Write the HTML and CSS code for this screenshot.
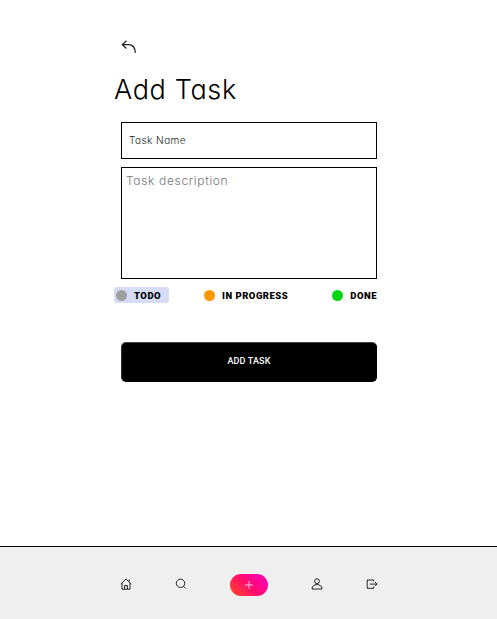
FILE: index.html
```html
<!DOCTYPE html>
<html lang="en">
<head>
<meta charset="utf-8">
<title>Add Task</title>
<link rel="stylesheet" href="styles.css">
</head>
<body>
<main class="page">
  <a class="back" href="#" aria-label="Back"><svg width="16" height="14" viewBox="0 0 16 14"><path d="M5.5 .8 1.2 4.7l4.3 3.8M1.2 4.7h6.3c4 0 6.8 3 6.8 8.3"/></svg></a>
  <h1 class="title">Add Task</h1>
  <form class="form">
    <input class="name" type="text" placeholder="Task Name">
    <textarea class="description" placeholder="Task description"></textarea>
    <div class="statuses">
      <span class="status selected"><i class="dot gray"></i>TODO</span>
      <span class="status progress"><i class="dot orange"></i>IN PROGRESS</span>
      <span class="status"><i class="dot green"></i>DONE</span>
    </div>
    <button class="submit" type="button">ADD TASK</button>
  </form>
</main>
<nav class="nav">
  <a href="#" aria-label="Home"><svg width="12" height="12" viewBox="0 0 12 12"><path d="M.7 6 6 1l5.3 5M2 5v6.2h8V5M4.6 11V7.5h2.8V11M9.3 1.5v2"/></svg></a>
  <a href="#" aria-label="Search"><svg width="12" height="12" viewBox="0 0 12 12"><circle cx="5.5" cy="5.3" r="4.2"/><path d="m8.6 8.4 2 2"/></svg></a>
  <a class="add" href="#" aria-label="Add"><svg width="10" height="10" viewBox="0 0 10 10"><path d="M5 1v8M1 5h8"/></svg></a>
  <a href="#" aria-label="Profile"><svg width="12" height="12" viewBox="0 0 12 12"><circle cx="6" cy="3.2" r="2.4"/><path d="M1 11c0-2.8 2-4.4 5-4.4s5 1.6 5 4.4z"/></svg></a>
  <a href="#" aria-label="Log out"><svg width="12" height="12" viewBox="0 0 12 12"><path d="M7.5 3.5V2H1.2v8.3h6.3V8.6M3.8 6.1H11M9 4l2.1 2.1L9 8.2"/></svg></a>
</nav>
</body>
</html>
```
FILE: styles.css
```css
* { box-sizing: border-box; }
body {
  margin: 0;
  height: 619px;
  display: flex;
  flex-direction: column;
  background: #fff;
  color: #000;
  font-family: Roboto, sans-serif;
  overflow: hidden;
}
svg { display: block; fill: none; stroke: #222; stroke-width: 1; }
.page { flex: 1; width: 256px; margin-left: 121px; padding-top: 40px; }
.back { display: block; width: 16px; }
.back svg { stroke-width: 1.2; }
.title, .name, .description {
  font-family: Inter, Lato, sans-serif;
  font-feature-settings: "cv11";
  font-weight: 300;
}
.title {
  margin: 18px 0 0 -7px;
  font-size: 27px;
  line-height: 36px;
  letter-spacing: .65px;
  white-space: nowrap;
}
.form { display: flex; flex-direction: column; margin-top: 14px; }
.name, .description {
  width: 100%;
  margin: 0;
  border: 1px solid #000;
  border-radius: 0;
  background: #fff;
  outline: 0;
  resize: none;
}
.name { height: 37px; padding: 0 7px 1px; font-size: 10px; letter-spacing: .45px; }
.name::placeholder { color: #222; opacity: 1; }
.description { height: 112px; margin-top: 8px; padding: 5px 4px; font-size: 12px; line-height: 16px; letter-spacing: .65px; }
.description::placeholder { color: #757575; opacity: 1; }
.statuses { display: flex; justify-content: space-between; margin: 8px 0 0 -7px; }
.status {
  display: flex;
  align-items: center;
  height: 16px;
  font-size: 9.5px;
  font-weight: 900;
  letter-spacing: .5px;
  white-space: nowrap;
}
.selected { width: 55px; padding-left: 2px; border-radius: 3px; background: #d6dcf7; }
.progress { margin-right: 9px; }
.dot { width: 11px; height: 11px; margin-right: 7px; border-radius: 50%; }
.gray { background: #a0a0a0; }
.orange { background: #ff9800; }
.green { background: #05d60d; }
.submit {
  height: 40px;
  margin-top: 39px;
  padding: 0 0 3px;
  border: 1px solid #333;
  border-color: #444 #000 #000 #333;
  border-radius: 5px;
  background: #000;
  color: #fff;
  font: 500 9px Roboto, sans-serif;
  letter-spacing: .15px;
}
.nav {
  display: flex;
  align-items: center;
  justify-content: space-between;
  height: 73px;
  padding: 4px 119px 0 120px;
  border-top: 1px solid #000;
  background: #efefef;
}
.nav svg { margin-top: -2px; }
.nav .add svg { margin-top: 0; stroke: #ffc0df; }
.add {
  display: grid;
  place-items: center;
  width: 38px;
  height: 22px;
  border-radius: 11px;
  background: linear-gradient(45deg, #ff4b1f, #ff0b70 50%, #ff00c8);
}
```
